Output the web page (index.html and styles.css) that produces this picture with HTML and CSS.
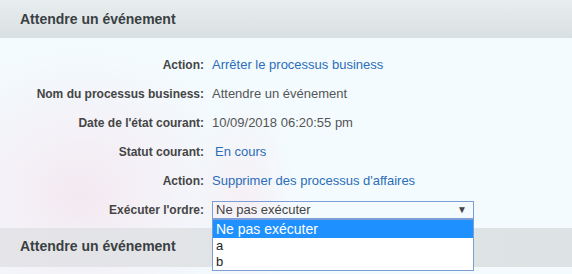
FILE: index.html
```html
<!DOCTYPE html>
<html>
	<head>
		<meta charset="utf-8">
		<title>Attendre un événement</title>
		<link rel="stylesheet" href="styles.css">
	</head>
	<body>
		<div class="panel">
			<div class="panel-head">Attendre un événement</div>
			<div class="panel-body">
				<div class="row">
					<span class="label">Action:</span>
					<a class="value link" href="#">Arrêter le processus business</a>
				</div>
				<div class="row">
					<span class="label">Nom du processus business:</span>
					<span class="value">Attendre un événement</span>
				</div>
				<div class="row">
					<span class="label">Date de l'état courant:</span>
					<span class="value">10/09/2018 06:20:55 pm</span>
				</div>
				<div class="row">
					<span class="label">Statut courant:</span>
					<a class="value link status" href="#">En cours</a>
				</div>
				<div class="row">
					<span class="label">Action:</span>
					<a class="value link" href="#">Supprimer des processus d'affaires</a>
				</div>
				<div class="row">
					<span class="label">Exécuter l'ordre:</span>
					<div class="select">
						<span class="select-text">Ne pas exécuter</span>
						<span class="select-arrow">&#9660;</span>
						<ul class="select-list">
							<li class="active">Ne pas exécuter</li>
							<li>a</li>
							<li>b</li>
						</ul>
					</div>
				</div>
			</div>
		</div>
		<div class="panel">
			<div class="panel-head second">Attendre un événement</div>
		</div>
	</body>
</html>
```

FILE: styles.css
```css
*{
	padding: 0;
	margin: 0;
	border: 0;
}
body{
	width: 572px;
	height: 274px;
	overflow: hidden;
	font-family: "Liberation Sans", Arial, sans-serif;
	background-color: #f3fbfe;
	background-image: radial-gradient(ellipse 170px 150px at 80px 195px, rgba(244,230,239,0.85), rgba(244,230,239,0) 100%),
		radial-gradient(ellipse 50px 110px at 245px 200px, rgba(246,234,241,0.7), rgba(246,234,241,0) 100%);
}
.panel-head{
	height: 38px;
	line-height: 38px;
	padding-left: 20px;
	font-size: 14px;
	font-weight: bold;
	color: #3a3f44;
	background: linear-gradient(#e8eef0, #d9e0e1);
}
.panel-head.second{
	height: 39px;
	line-height: 37px;
	background: linear-gradient(90deg, #e5e4e8, #dfe4e5 60%, #dde3e4);
}
.panel-body{
	padding: 12px 0 4px 0;
}
.row{
	display: flex;
	align-items: center;
	height: 29px;
}
.label{
	width: 204px;
	text-align: right;
	font-size: 12px;
	font-weight: bold;
	color: #454545;
}
.value{
	margin-left: 8px;
	font-size: 13px;
	color: #555;
}
.link{
	color: #2b6db8;
	text-decoration: none;
}
.status{
	margin-left: 11px;
}
.select{
	position: relative;
	margin-left: 8px;
	width: 260px;
	height: 16px;
	border: 1px solid #7d9ed4;
	background-color: transparent;
	display: flex;
	align-items: center;
	justify-content: space-between;
	font-size: 13px;
	color: #444;
}
.select-text{
	padding-left: 3px;
}
.select-arrow{
	font-size: 10px;
	color: #444;
	padding-right: 6px;
}
.select-list{
	position: absolute;
	left: -1px;
	top: 17px;
	width: 260px;
	border: 1px solid #7d9ed4;
	background-color: #fff;
	list-style-type: none;
	z-index: 999;
}
.select-list li{
	height: 16px;
	line-height: 16px;
	padding-left: 3px;
	font-size: 13px;
	color: #222;
}
.select-list li.active{
	height: 18px;
	line-height: 18px;
	background-color: #1e90ff;
	color: #fff;
	font-size: 14px;
}
```
